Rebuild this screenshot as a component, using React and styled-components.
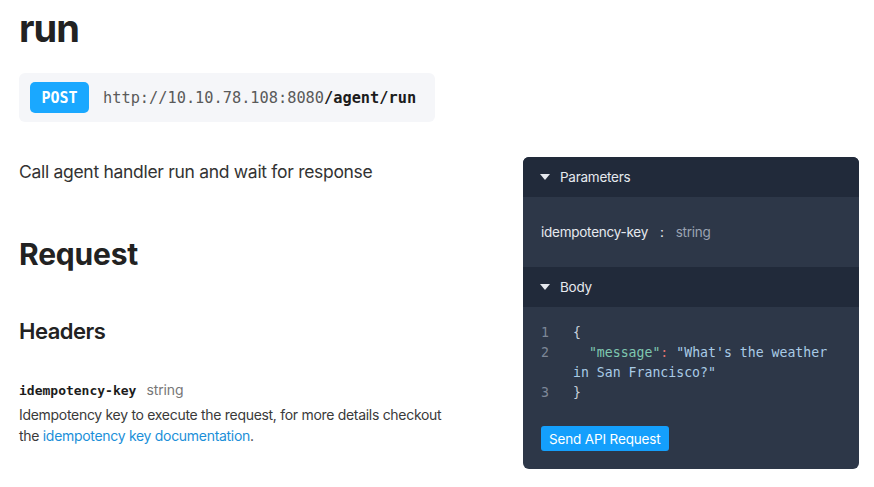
import styled, { createGlobalStyle } from "styled-components";

const GlobalStyle = createGlobalStyle`
	html, body {
		margin: 0;
		padding: 0;
		background: #ffffff;
	}

	body {
		font-family: Inter, "Noto Sans", "Liberation Sans", sans-serif;
		color: #222;
	}
`;

const MONO = `"DejaVu Sans Mono", "Liberation Mono", monospace`;

const Page = styled.div`
	display: flex;
	align-items: flex-start;
	gap: 74px;
	padding-left: 19px;
	width: 874px;
	height: 487px;
	box-sizing: border-box;
	overflow: hidden;
`;

const LeftColumn = styled.div`
	display: flex;
	flex-direction: column;
	width: 430px;
	flex-shrink: 0;
`;

const Title = styled.h1`
	margin: 4px 0 0;
	font-size: 38px;
	line-height: 48px;
	font-weight: 700;
	letter-spacing: -1px;
	color: #222;
`;

const Endpoint = styled.div`
	display: flex;
	align-items: center;
	gap: 14px;
	width: 416px;
	box-sizing: border-box;
	margin-top: 21px;
	height: 49px;
	padding: 0 11px;
	background: #f5f6f9;
	border-radius: 6px;
`;

const Method = styled.span`
	display: flex;
	align-items: center;
	justify-content: center;
	width: 59px;
	height: 31px;
	border-radius: 5px;
	background: #1aa8ff;
	color: #fff;
	font-family: ${MONO};
	font-size: 15px;
	font-weight: 700;
`;

const Url = styled.span`
	font-family: ${MONO};
	font-size: 15.3px;
	color: #5a5a5a;

	& > b {
		color: #1c1c1c;
	}
`;

const Lead = styled.p`
	margin: 38px 0 0;
	font-size: 17.5px;
	line-height: 24px;
	letter-spacing: -0.3px;
	color: #333;
`;

const SectionTitle = styled.h2`
	margin: 52px 0 0;
	font-size: 30px;
	line-height: 36px;
	font-weight: 700;
	letter-spacing: -0.2px;
	color: #222;
`;

const SubTitle = styled.h3`
	margin: 45px 0 0;
	font-size: 22px;
	line-height: 28px;
	font-weight: 600;
	letter-spacing: -0.5px;
	color: #222;
`;

const FieldRow = styled.div`
	display: flex;
	align-items: baseline;
	gap: 10px;
	margin-top: 35px;
	line-height: 20px;
`;

const FieldName = styled.span`
	font-family: ${MONO};
	font-size: 13px;
	font-weight: 700;
	color: #1c1c1c;
`;

const FieldType = styled.span`
	font-size: 14px;
	letter-spacing: -0.1px;
	color: #777;
`;

const FieldText = styled.p`
	margin: 3px 0 0;
	font-size: 14px;
	line-height: 21px;
	letter-spacing: -0.3px;
	color: #3a3a3a;

	& > a {
		color: #1b8fd9;
		text-decoration: none;
	}
`;

const RightColumn = styled.div`
	padding-top: 157px;
	width: 336px;
	flex-shrink: 0;
`;

const Panel = styled.div`
	border-radius: 6px;
	overflow: hidden;
	background: #2d3748;
`;

const PanelHeader = styled.div`
	display: flex;
	align-items: center;
	gap: 10px;
	height: 40px;
	padding: 0 18px 0 17px;
	background: #212a3a;
	color: #e6e9ee;
	font-size: 13.5px;
	letter-spacing: -0.25px;
`;

const Caret = styled.span`
	width: 0;
	height: 0;
	border-left: 5px solid transparent;
	border-right: 5px solid transparent;
	border-top: 6px solid #e6e9ee;
`;

const ParamRow = styled.div`
	display: flex;
	align-items: center;
	gap: 12px;
	height: 70px;
	padding: 0 18px;
	font-size: 13.5px;
	letter-spacing: -0.25px;
	color: #e6e9ee;

	& > .muted {
		color: #9aa3b2;
	}
`;

const BodyBlock = styled.div`
	padding: 16px 18px 18px;
`;

const Code = styled.div`
	display: grid;
	grid-template-columns: 32px 1fr;
	font-family: ${MONO};
	font-size: 13.2px;
	line-height: 20px;
	color: #a9cbe6;
`;

const LineNo = styled.span`
	color: #7d8798;
`;

const CodeLine = styled.span`
	white-space: pre-wrap;
	color: ${({ $muted }) => ($muted ? "#c9d1dc" : "#a9cbe6")};

	& > .key {
		color: #7fc8b0;
	}

	& > .punct {
		color: #e3736f;
	}
`;

const SendButton = styled.button`
	margin-top: 23px;
	height: 25px;
	padding: 0 8px;
	border: none;
	border-radius: 3px;
	background: #149ffc;
	color: #fff;
	font-family: Inter, "Noto Sans", sans-serif;
	font-size: 13.5px;
	letter-spacing: -0.15px;
	cursor: pointer;
`;

export default function App() {
	return (
		<>
			<GlobalStyle />
			<Page>
				<LeftColumn>
					<Title>run</Title>
					<Endpoint>
						<Method>POST</Method>
						<Url>
							http://10.10.78.108:8080<b>/agent/run</b>
						</Url>
					</Endpoint>
					<Lead>Call agent handler run and wait for response</Lead>
					<SectionTitle>Request</SectionTitle>
					<SubTitle>Headers</SubTitle>
					<FieldRow>
						<FieldName>idempotency-key</FieldName>
						<FieldType>string</FieldType>
					</FieldRow>
					<FieldText>
						Idempotency key to execute the request, for more details checkout
						the <a href="#">idempotency key documentation</a>.
					</FieldText>
				</LeftColumn>

				<RightColumn>
					<Panel>
						<PanelHeader>
							<Caret />
							Parameters
						</PanelHeader>
						<ParamRow>
							<span>idempotency-key</span>
							<span>:</span>
							<span className="muted">string</span>
						</ParamRow>
						<PanelHeader>
							<Caret />
							Body
						</PanelHeader>
						<BodyBlock>
							<Code>
								<LineNo>1</LineNo>
								<CodeLine $muted>{"{"}</CodeLine>
								<LineNo>2</LineNo>
								<CodeLine>
									{"  "}
									<span className="key">"message"</span>
									<span className="punct">:</span> "What's the weather in San
									Francisco?"
								</CodeLine>
								<LineNo>3</LineNo>
								<CodeLine $muted>{"}"}</CodeLine>
							</Code>
							<SendButton>Send API Request</SendButton>
						</BodyBlock>
					</Panel>
				</RightColumn>
			</Page>
		</>
	);
}
